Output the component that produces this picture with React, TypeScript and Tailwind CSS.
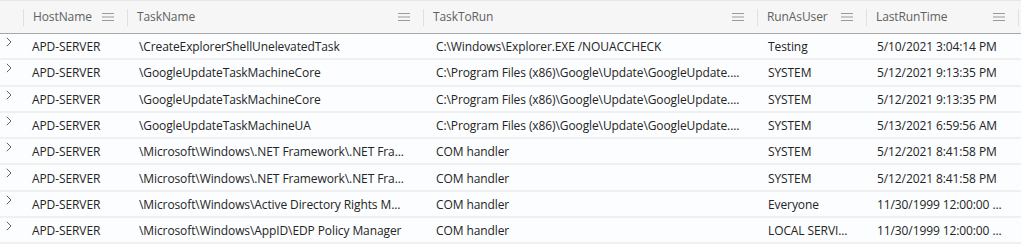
import React from "react";

type Task = {
  host: string;
  name: string;
  run: string;
  user: string;
  last: string;
};

const tasks: Task[] = [
  { host: "APD-SERVER", name: "\\CreateExplorerShellUnelevatedTask", run: "C:\\Windows\\Explorer.EXE /NOUACCHECK", user: "Testing", last: "5/10/2021 3:04:14 PM" },
  { host: "APD-SERVER", name: "\\GoogleUpdateTaskMachineCore", run: "C:\\Program Files (x86)\\Google\\Update\\GoogleUpdate....", user: "SYSTEM", last: "5/12/2021 9:13:35 PM" },
  { host: "APD-SERVER", name: "\\GoogleUpdateTaskMachineCore", run: "C:\\Program Files (x86)\\Google\\Update\\GoogleUpdate....", user: "SYSTEM", last: "5/12/2021 9:13:35 PM" },
  { host: "APD-SERVER", name: "\\GoogleUpdateTaskMachineUA", run: "C:\\Program Files (x86)\\Google\\Update\\GoogleUpdate....", user: "SYSTEM", last: "5/13/2021 6:59:56 AM" },
  { host: "APD-SERVER", name: "\\Microsoft\\Windows\\.NET Framework\\.NET Fra...", run: "COM handler", user: "SYSTEM", last: "5/12/2021 8:41:58 PM" },
  { host: "APD-SERVER", name: "\\Microsoft\\Windows\\.NET Framework\\.NET Fra...", run: "COM handler", user: "SYSTEM", last: "5/12/2021 8:41:58 PM" },
  { host: "APD-SERVER", name: "\\Microsoft\\Windows\\Active Directory Rights M...", run: "COM handler", user: "Everyone", last: "11/30/1999 12:00:00 ..." },
  { host: "APD-SERVER", name: "\\Microsoft\\Windows\\AppID\\EDP Policy Manager", run: "COM handler", user: "LOCAL SERVI...", last: "11/30/1999 12:00:00 ..." },
];

const cols = "grid grid-cols-[23px_104px_296px_334px_109px_152px_1fr]";

function MenuIcon() {
  return (
    <svg width="12" height="10" viewBox="0 0 12 10" className="shrink-0 text-[#9a9a9a]">
      <path d="M0 1.5h12M0 5h12M0 8.5h12" stroke="currentColor" strokeWidth="1" />
    </svg>
  );
}

function Chevron() {
  return (
    <svg width="6" height="10" viewBox="0 0 6 10" className="text-[#616161]">
      <path d="M0.8 0.8L5 5L0.8 9.2" fill="none" stroke="currentColor" strokeWidth="1" />
    </svg>
  );
}

function HeaderCell({ label }: { label: string }) {
  return (
    <div className="flex items-center">
      <div className="h-[17px] w-px bg-[#e0e0e0]" />
      <div className="flex flex-1 items-center justify-between pl-[9px] pr-[13px]">
        <span>{label}</span>
        <MenuIcon />
      </div>
    </div>
  );
}

export default function App() {
  return (
    <div
      className="w-[1021px] h-[248px] overflow-hidden bg-white text-[12px] tracking-[-0.1px] text-[#242424]"
      style={{ fontFamily: '"Segoe UI", "Open Sans", sans-serif' }}
    >
      <div className={`${cols} h-[34px] border-t border-b border-t-[#e6e6e6] border-b-[#a8a8a8] bg-[#f6f6f6] text-[#616161]`}>
        <div />
        <HeaderCell label="HostName" />
        <HeaderCell label="TaskName" />
        <HeaderCell label="TaskToRun" />
        <HeaderCell label="RunAsUser" />
        <HeaderCell label="LastRunTime" />
        <div className="flex items-center">
          <div className="h-[17px] w-px bg-[#e0e0e0]" />
        </div>
      </div>
      {tasks.map((t, i) => (
        <div
          key={i}
          className={`${cols} h-[26.3px] items-center border-b-2 border-[#f0f0f0] bg-[#fcfdfe] pt-[2px]`}
        >
          <div className="flex h-full items-start pl-[6px] pt-[1px]">
            <Chevron />
          </div>
          <div className="truncate pl-[9px]">{t.host}</div>
          <div className="truncate pl-[12px]">{t.name}</div>
          <div className="truncate pl-[13px]">{t.run}</div>
          <div className="truncate pl-[11px]">{t.user}</div>
          <div className="truncate pl-[11px]">{t.last}</div>
          <div />
        </div>
      ))}
    </div>
  );
}
